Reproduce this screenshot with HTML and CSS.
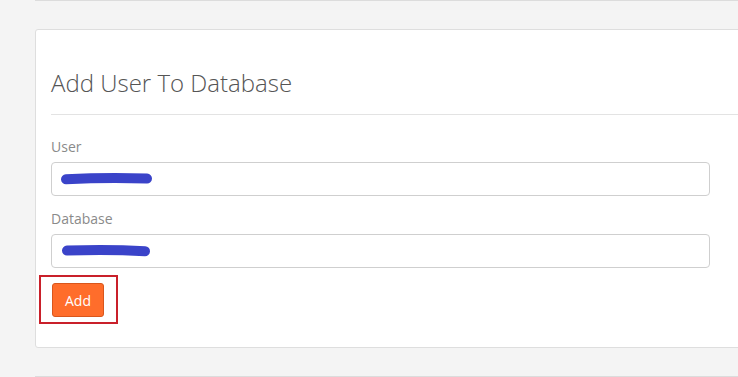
FILE: index.html
```html
<!DOCTYPE html>
<html>
<head>
<meta charset="utf-8">
<link rel="stylesheet" href="styles.css">
</head>
<body>
<div class="page">
  <div class="prev-panel"></div>
  <div class="panel">
    <h3 class="panel-title">Add User To Database</h3>
    <div class="panel-body">
      <div class="field">
        <label class="label">User</label>
        <div class="input">
          <svg class="scribble" width="100" height="16" viewBox="0 0 100 16"><path d="M5 8.3 C 30 7, 65 6.8, 86 7.6" stroke="#3a43c9" stroke-width="10" stroke-linecap="round" fill="none"/></svg>
        </div>
      </div>
      <div class="field">
        <label class="label">Database</label>
        <div class="input">
          <svg class="scribble two" width="100" height="16" viewBox="0 0 100 16"><path d="M5 7.6 C 30 6.8, 60 7, 83 8.2" stroke="#3a43c9" stroke-width="10" stroke-linecap="round" fill="none"/></svg>
        </div>
      </div>
      <div class="highlight">
        <button class="btn">Add</button>
      </div>
    </div>
  </div>
  <div class="next-panel"></div>
</div>
</body>
</html>
```
FILE: styles.css
```css
html, body {
  margin: 0;
  padding: 0;
  background: #f4f4f4;
  overflow: hidden;
  height: 377px;
}
.page {
  padding-left: 35px;
  font-family: "Open Sans", "Liberation Sans", sans-serif;
}
.prev-panel {
  height: 0;
  border-bottom: 1px solid #dcdcdc;
  width: 720px;
}
.panel {
  margin-top: 28px;
  width: 720px;
  background: #fff;
  border: 1px solid #dedede;
  border-radius: 3px;
}
.panel-title {
  margin: 0 0 0 15px;
  padding: 40px 0 18px;
  font-size: 24px;
  line-height: 26px;
  font-weight: 300;
  color: #555;
  border-bottom: 1px solid #e3e3e3;
}
.panel-body {
  padding: 22px 15px 23px 3px;
}
.field {
  padding-left: 12px;
  margin-bottom: 13px;
}
.label {
  display: block;
  font-size: 14px;
  line-height: 20px;
  color: #8a8a8a;
  font-weight: 400;
  margin-bottom: 5px;
}
.input {
  position: relative;
  width: 657px;
  height: 32px;
  border: 1px solid #cfcfcf;
  border-radius: 4px;
  background: #fff;
}
.scribble {
  position: absolute;
  left: 9px;
  top: 8px;
}
.scribble.two {
  left: 10px;
  top: 8px;
}
.highlight {
  display: inline-block;
  margin-top: -6px;
  border: 2px solid #c9202a;
  padding: 6px 12px 5px 11px;
}
.btn {
  display: block;
  width: 52px;
  height: 34px;
  background: #ff6d2b;
  border: 1px solid #d9561c;
  border-radius: 3px;
  color: #fff;
  font-family: "Open Sans", "Liberation Sans", sans-serif;
  font-size: 14px;
  font-weight: 400;
  padding: 0;
}
.next-panel {
  margin-top: 28px;
  width: 720px;
  height: 0;
  border-top: 1px solid #dcdcdc;
}
```
